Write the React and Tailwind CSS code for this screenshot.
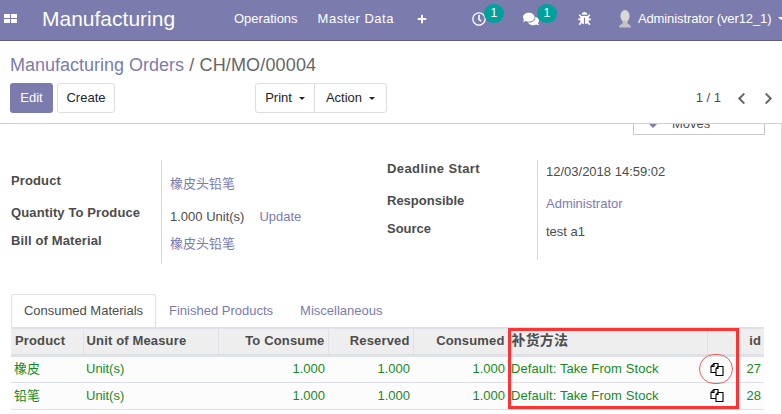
import { FaBug, FaChevronLeft, FaChevronRight, FaComments, FaPlus, FaRegClock } from "react-icons/fa";

function Caret() {
  return <span className="ml-[7px] inline-block shrink-0 border-x-[3px] border-t-[3px] border-x-transparent border-t-current" />;
}

function Badge({ className, children }) {
  return (
    <span className={`absolute flex h-[19px] w-[20px] items-center justify-center rounded-full bg-[#00a09d] text-[12px] text-white ${className}`}>
      {children}
    </span>
  );
}

function CopyIcon() {
  return (
    <svg width="14" height="13" viewBox="0 0 13 13" fill="none" stroke="#000" strokeWidth="1.1">
      <path d="M5.5 9.5H0.5V3.5L3.5 0.5H7.5V3.5" />
      <path d="M3.5 0.5V3.5H0.5" />
      <path d="M5.5 9.5V5.5L7.5 3.5H12.5V12.5H5.5V9.5" fill="#fff" />
      <path d="M7.5 3.5V5.5H5.5" />
    </svg>
  );
}

function Avatar() {
  return (
    <svg width="14" height="18" viewBox="0 0 14 18">
      <ellipse cx="7" cy="6" rx="4.6" ry="6" fill="#d9d9d9" />
      <path d="M4.5 10.5V13.5C3 14.5 1 15 1 17.5H13C13 15 11 14.5 9.5 13.5V10.5Z" fill="#c4c4c4" />
    </svg>
  );
}

const rows = [
  { id: 27, product: "橡皮" },
  { id: 28, product: "铅笔" },
];

const th = "h-[27px] border-r border-[#dee2e6] px-[3px] pb-[2px] align-middle text-[13px] font-bold tracking-[0.15px] text-[#4c4c4c]";
const td = "h-[27px] px-[3px] align-middle";

export default function App() {
  return (
    <div className="flex h-[414px] w-[782px] flex-col overflow-hidden bg-white font-['Liberation_Sans','Noto_Sans_CJK_SC',sans-serif] text-[13px] text-[#4c4c4c]">
      <nav className="flex h-[41px] shrink-0 items-center overflow-hidden whitespace-nowrap border-b border-[#5f5e8b] bg-[#7c7bad] pb-[3px] text-white">
        <div className="ml-[4px] grid w-[13px] shrink-0 grid-cols-2 gap-[1px]">
          <span className="h-[4px] bg-white" />
          <span className="h-[4px] bg-white" />
          <span className="h-[4px] bg-white" />
          <span className="h-[4px] bg-white" />
        </div>
        <span className="ml-[25px] w-[192px] shrink-0 text-[21px] leading-none">Manufacturing</span>
        <span className="shrink-0">Operations</span>
        <span className="ml-[20px] shrink-0 tracking-[0.5px]">Master Data</span>
        <FaPlus className="ml-[23px] shrink-0 text-[10px]" />
        <span className="relative ml-[45px] flex shrink-0">
          <FaRegClock className="text-[14px]" />
          <Badge className="left-[12px] top-[-8px]">1</Badge>
        </span>
        <span className="relative ml-[37px] flex shrink-0">
          <FaComments className="text-[16px]" />
          <Badge className="left-[14px] top-[-7px]">1</Badge>
        </span>
        <FaBug className="ml-[39px] shrink-0 text-[13px]" />
        <span className="ml-[27px] flex shrink-0">
          <Avatar />
        </span>
        <span className="ml-[6px] shrink-0 tracking-[-0.1px]">Administrator (ver12_1)</span>
        <Caret />
      </nav>

      <header className="shrink-0 border-b border-[#d0d0d0] px-[10px] pt-[13px]">
        <div className="h-[22px] text-[18px] leading-[22px]">
          <span className="text-[#7c7bad]">Manufacturing Orders</span>
          <span className="tracking-[0.15px] text-[#666]"> / CH/MO/00004</span>
        </div>
        <div className="mt-[7px] mb-[10px] flex h-[30px] items-stretch">
          <div className="flex w-[245px] gap-[4px]">
            <button className="w-[43px] rounded-[3px] bg-[#7c7bad] text-white">Edit</button>
            <button className="w-[58px] rounded-[3px] border border-[#dedede] text-[#212529]">Create</button>
          </div>
          <div className="flex rounded-[3px] border border-[#dedede] text-[#212529]">
            <button className="flex w-[59px] items-center justify-center border-r border-[#dedede]">Print<Caret /></button>
            <button className="flex w-[71px] items-center justify-center">Action<Caret /></button>
          </div>
          <div className="ml-auto flex items-center text-[#4c4c4c]">
            <span>1 / 1</span>
            <FaChevronLeft className="ml-[14px] text-[13px] text-[#666]" />
            <FaChevronRight className="ml-[14px] mr-[-3px] text-[13px] text-[#666]" />
          </div>
        </div>
      </header>

      <main className="relative min-h-0 flex-1 overflow-hidden border-r border-[#d8d8d8] pl-[11px] pr-[16px]">
        <div className="-mt-[1px] ml-auto flex h-[12px] w-[132px] items-end gap-[14px] overflow-hidden border-x border-b border-[#c8c8c8] pl-[14px] text-[#4c4c4c]">
          <span className="mb-[6px] h-0 w-0 border-x-[5px] border-t-[5px] border-x-transparent border-t-[#7c7bad]" />
          <span className="mb-[3px] leading-[14px]">Moves</span>
        </div>

        <section className="mt-[25px] flex h-[105px] items-start">
          <div className="flex h-[104px] w-[376px]">
            <div className="w-[150px] font-bold leading-[20px] tracking-[0.12px]">
              <div className="mt-[11px]">Product</div>
              <div className="mt-[12px] whitespace-nowrap">Quantity To Produce</div>
              <div className="mt-[8px]">Bill of Material</div>
            </div>
            <div className="border-l border-[#d8d8d8] pl-[8px] leading-[20px]">
              <div className="mt-[14px] text-[#7c7bad]">橡皮头铅笔</div>
              <div className="mt-[13px] whitespace-nowrap">1.000 Unit(s)<span className="ml-[15px] text-[#7c7bad]">Update</span></div>
              <div className="mt-[7px] text-[#7c7bad]">橡皮头铅笔</div>
            </div>
          </div>
          <div className="flex h-[100px] w-[360px]">
            <div className="w-[150px] font-bold leading-[20px]">
              <div className="-mt-[1px] tracking-[0.4px]">Deadline Start</div>
              <div className="mt-[12px]">Responsible</div>
              <div className="mt-[8px]">Source</div>
            </div>
            <div className="border-l border-[#d8d8d8] pl-[8px] leading-[20px]">
              <div className="mt-[2px]">12/03/2018 14:59:02</div>
              <div className="mt-[12px] text-[#7c7bad]">Administrator</div>
              <div className="mt-[8px]">test a1</div>
            </div>
          </div>
        </section>

        <div className="mt-[29px] flex h-[33px] items-stretch">
          <div className="flex w-[145px] items-center justify-center rounded-t-[3px] border-x border-t border-[#dee2e6] bg-white text-[#4c4c4c]">Consumed Materials</div>
          <div className="ml-[13px] flex items-center text-[#7c7bad]">Finished Products</div>
          <div className="ml-[27px] flex items-center text-[#7c7bad]">Miscellaneous</div>
        </div>

        <div className="relative">
          <table className="w-[753px] table-fixed border-collapse text-[#178a25]">
            <colgroup>
              <col className="w-[72px]" />
              <col className="w-[135px]" />
              <col className="w-[110px]" />
              <col className="w-[85px]" />
              <col className="w-[95px]" />
              <col className="w-[199px]" />
              <col className="w-[30px]" />
              <col className="w-[27px]" />
            </colgroup>
            <thead>
              <tr className="border-y-[3px] border-t-[2px] border-[#dee2e6] bg-[#eeeeee]">
                <th className={`${th} pl-[4px] text-left`}>Product</th>
                <th className={`${th} text-left`}>Unit of Measure</th>
                <th className={`${th} text-right`}>To Consume</th>
                <th className={`${th} text-right`}>Reserved</th>
                <th className={`${th} whitespace-nowrap text-right`}>Consumed</th>
                <th className={`${th} text-left text-[14px]`}>补货方法</th>
                <th className={th} />
                <th className={`${th} border-r-0 text-right`}>id</th>
              </tr>
            </thead>
            <tbody>
              {rows.map((row) => (
                <tr key={row.id} className="border-b border-[#dee2e6] bg-[#fcfcfc]">
                  <td className={td}>{row.product}</td>
                  <td className={td}>Unit(s)</td>
                  <td className={`${td} text-right`}>1.000</td>
                  <td className={`${td} text-right`}>1.000</td>
                  <td className={`${td} text-right`}>1.000</td>
                  <td className={`${td} whitespace-nowrap tracking-[0.08px]`}>Default: Take From Stock</td>
                  <td className={td}><CopyIcon /></td>
                  <td className={`${td} text-right`}>{row.id}</td>
                </tr>
              ))}
            </tbody>
          </table>
          <div className="pointer-events-none absolute left-[497px] top-[1px] h-[81px] w-[231px] border-[3px] border-[#ff3333]" />
          <div className="pointer-events-none absolute left-[688px] top-[27px] h-[30px] w-[34px] rounded-full border border-[#e8605c]" />
        </div>
      </main>
    </div>
  );
}
